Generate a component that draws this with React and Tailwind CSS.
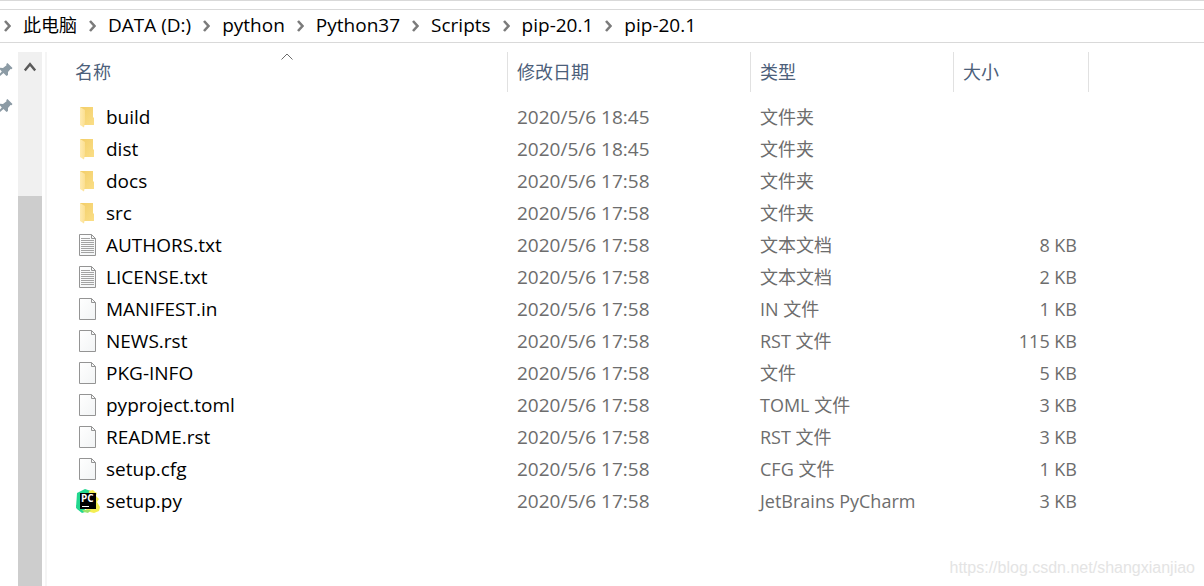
import { useState } from "react";

const path = ["此电脑", "DATA (D:)", "python", "Python37", "Scripts", "pip-20.1", "pip-20.1"];

const files = [
  { name: "build", icon: "folder", date: "2020/5/6 18:45", type: "文件夹", size: "" },
  { name: "dist", icon: "folder", date: "2020/5/6 18:45", type: "文件夹", size: "" },
  { name: "docs", icon: "folder", date: "2020/5/6 17:58", type: "文件夹", size: "" },
  { name: "src", icon: "folder", date: "2020/5/6 17:58", type: "文件夹", size: "" },
  { name: "AUTHORS.txt", icon: "text", date: "2020/5/6 17:58", type: "文本文档", size: "8 KB" },
  { name: "LICENSE.txt", icon: "text", date: "2020/5/6 17:58", type: "文本文档", size: "2 KB" },
  { name: "MANIFEST.in", icon: "file", date: "2020/5/6 17:58", type: "IN 文件", size: "1 KB" },
  { name: "NEWS.rst", icon: "file", date: "2020/5/6 17:58", type: "RST 文件", size: "115 KB" },
  { name: "PKG-INFO", icon: "file", date: "2020/5/6 17:58", type: "文件", size: "5 KB" },
  { name: "pyproject.toml", icon: "file", date: "2020/5/6 17:58", type: "TOML 文件", size: "3 KB" },
  { name: "README.rst", icon: "file", date: "2020/5/6 17:58", type: "RST 文件", size: "3 KB" },
  { name: "setup.cfg", icon: "file", date: "2020/5/6 17:58", type: "CFG 文件", size: "1 KB" },
  { name: "setup.py", icon: "pycharm", date: "2020/5/6 17:58", type: "JetBrains PyCharm", size: "3 KB" },
];

function Chevron() {
  return (
    <svg width="7" height="12" viewBox="0 0 7 12" fill="none" aria-hidden="true" className="shrink-0">
      <path d="M1 1L5.5 6L1 11" stroke="#7b7b7b" strokeWidth="2.6" />
    </svg>
  );
}

function Pin() {
  return (
    <svg width="13" height="16" viewBox="0 0 13 16" fill="#8c9ba5" aria-hidden="true">
      <path d="M7.5 1L12.5 6L11.5 7.2L10.5 7L8 10L8 13L6.5 14L3.5 11L0 14V11.5L1.8 9.5L0 7.6V5.8L3 6L6.5 3.2L6.3 2Z" />
    </svg>
  );
}

function FolderIcon() {
  return (
    <svg width="24" height="24" viewBox="0 0 24 24" aria-hidden="true">
      <defs>
        <linearGradient id="folder-back" x1="0" y1="0" x2="1" y2="1">
          <stop offset="0" stopColor="#f3ce68" />
          <stop offset="1" stopColor="#fade87" />
        </linearGradient>
        <linearGradient id="folder-front" x1="0" y1="0" x2="1" y2="0">
          <stop offset="0" stopColor="#ffebb0" />
          <stop offset="1" stopColor="#fbdf91" />
        </linearGradient>
      </defs>
      <path d="M4 2H17V12L18 13V20H8L4 19Z" fill="url(#folder-back)" />
      <path d="M4 2L9 5V17L8 22.5L4 20Z" fill="url(#folder-front)" />
    </svg>
  );
}

function PageIcon({ lines }) {
  return (
    <svg width="24" height="24" viewBox="0 0 24 24" fill="none" aria-hidden="true">
      <defs>
        <linearGradient id="page" x1="0" y1="0" x2="1" y2="1">
          <stop offset="0" stopColor="#ffffff" />
          <stop offset="1" stopColor="#f2f4f5" />
        </linearGradient>
      </defs>
      <path d="M3.5 1.5H15.5L19.5 5.5V22.5H3.5Z" fill="url(#page)" stroke="#949494" />
      <path d="M15.5 1.5V5.5H19.5" stroke="#949494" />
      {lines && (
        <path
          d="M5 5.5H14M5 7.5H18M5 9.5H18M5 11.5H18M5 13.5H18M5 15.5H18M5 17.5H18M5 19.5H18"
          stroke="#a3a3a3"
        />
      )}
    </svg>
  );
}

function PyCharmIcon() {
  return (
    <svg width="24" height="24" viewBox="0 0 24 24" aria-hidden="true">
      <path d="M1 4L9 0L15 2L18 12L6 23L0 19Z" fill="#22d88f" />
      <path d="M13 2L17 1L19 3L21 4L20 7L23 10L21 13L24 18L23 22L18 24L10 22Z" fill="#f4ee52" />
      <path d="M0 16L5 18L9 23L6 24L1 20Z" fill="#22d88f" />
      <path d="M6 21H15L12 24L8 23Z" fill="#9be36b" />
      <rect x="4" y="4" width="16" height="16" fill="#000" />
      <text x="5" y="13" fontFamily="Open Sans, sans-serif" fontSize="10" fontWeight="700" fill="#fff">
        PC
      </text>
      <rect x="6" y="17" width="7" height="1" fill="#fff" />
    </svg>
  );
}

function FileIcon({ icon }) {
  if (icon === "folder") return <FolderIcon />;
  if (icon === "pycharm") return <PyCharmIcon />;
  return <PageIcon lines={icon === "text"} />;
}

function HeaderCell({ label, first, sorted, onSort }) {
  return (
    <th scope="col" className="relative h-10 border-r border-[#e1e1e1] p-0 text-left font-normal">
      <button
        type="button"
        onClick={onSort}
        className={`block h-10 w-full text-left text-[#4c607a] ${first ? "pl-7" : "pl-[9px]"}`}
      >
        {label}
      </button>
      {sorted && (
        <svg
          width="12"
          height="7"
          viewBox="0 0 12 7"
          fill="none"
          aria-hidden="true"
          className="absolute top-px left-1/2 ml-1"
        >
          <path d="M0.5 6.5L6 1L11.5 6.5" stroke="#6b6b6b" />
        </svg>
      )}
    </th>
  );
}

export default function App() {
  const [sortColumn, setSortColumn] = useState("名称");

  return (
    <div className="relative flex min-h-screen flex-col overflow-hidden border-t border-[#d9d9d9] bg-white font-['Open_Sans','Noto_Sans_CJK_SC',sans-serif] text-lg text-black">
      <nav
        aria-label="路径"
        className="mt-2 flex h-[34px] items-center gap-3 border-y border-[#d9d9d9] pl-1 leading-7 whitespace-nowrap"
      >
        {path.map((part, index) => (
          <div key={index} className="flex items-center gap-3">
            <Chevron />
            <button type="button" className={index === 0 ? "pb-0.5 text-lg" : "pb-0.5 text-[19px]"}>
              {part}
            </button>
          </div>
        ))}
      </nav>

      <div className="flex flex-1 pt-[9px]">
        <aside className="flex w-[18px] shrink-0 flex-col gap-5 pt-[10px]">
          <Pin />
          <Pin />
        </aside>

        <div className="flex w-6 shrink-0 flex-col bg-[#f0f0f0]">
          <button type="button" aria-label="向上滚动" className="flex h-36 justify-center pt-[10px]">
            <svg width="12" height="10" viewBox="0 0 12 10" fill="none" aria-hidden="true">
              <path d="M0.8 8.5L6 2.2L11.2 8.5" stroke="#5a5a5a" strokeWidth="2.4" />
            </svg>
          </button>
          <div className="flex-1 bg-[#cdcdcd]" />
        </div>

        <main className="ml-[3px] min-w-0 flex-1 border-l-2 border-[#f5f5f5]">
          <table className="w-[1042px] table-fixed border-separate border-spacing-0">
            <colgroup>
              <col className="w-[461px]" />
              <col className="w-[243px]" />
              <col className="w-[203px]" />
              <col className="w-[135px]" />
            </colgroup>
            <thead>
              <tr>
                {["名称", "修改日期", "类型", "大小"].map((label, index) => (
                  <HeaderCell
                    key={label}
                    label={label}
                    first={index === 0}
                    sorted={sortColumn === label}
                    onSort={() => setSortColumn(label)}
                  />
                ))}
              </tr>
            </thead>
            <tbody className="before:block before:h-[9px]">
              {files.map((file) => (
                <tr key={file.name} className="h-8 text-[#6d6d6d]">
                  <td className="p-0 pl-[29px] text-[19px] leading-7">
                    <div className="flex h-8 items-center gap-1.5 text-black">
                      <FileIcon icon={file.icon} />
                      <span>{file.name}</span>
                    </div>
                  </td>
                  <td className="p-0 pl-[9px] text-[19px] leading-7">{file.date}</td>
                  <td className="p-0 pl-[9px]">{file.type}</td>
                  <td className="p-0 pr-3 text-right">{file.size}</td>
                </tr>
              ))}
            </tbody>
          </table>
        </main>
      </div>

      <p className="absolute right-[9px] bottom-2 font-['Liberation_Sans',Arial,sans-serif] text-base leading-5 text-[#e4e4e4]">
        https://blog.csdn.net/shangxianjiao
      </p>
    </div>
  );
}
